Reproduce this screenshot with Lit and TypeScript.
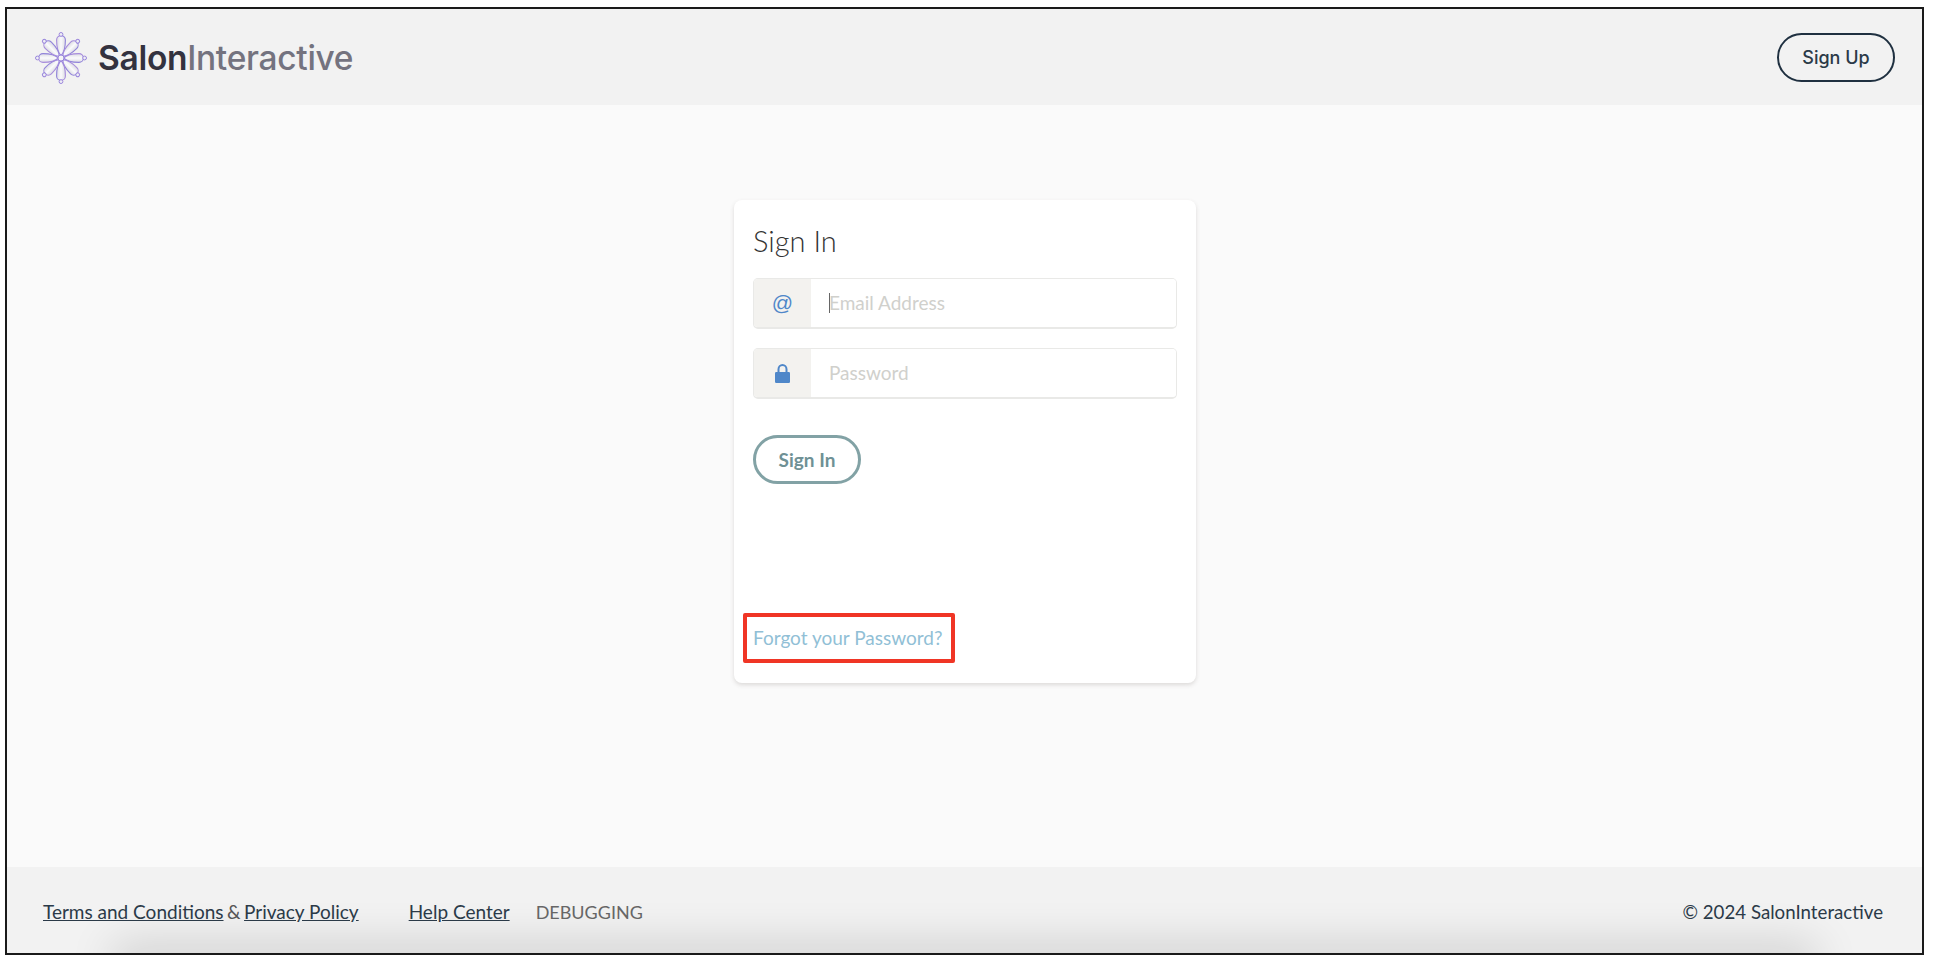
import { LitElement, html, css, svg } from "lit";
import { customElement } from "lit/decorators.js";

const angles = [0, 45, 90, 135, 180, 225, 270, 315];

@customElement("app-root")
export class AppRoot extends LitElement {
  static styles = css`
    :host { display: block; height: 964px; background: #fff; padding: 7px 10px 9px 5px; box-sizing: border-box; font-family: "Lato", "Open Sans", sans-serif; color: #2b3a48; }
    * { box-sizing: border-box; }
    .frame { height: 100%; border: 2px solid #1a1a1a; background: #fafafa; display: flex; flex-direction: column; overflow: hidden; }
    header { height: 96px; flex: none; background: #f2f2f2; display: flex; align-items: center; justify-content: space-between; padding: 2px 27px 0 27px; }
    .brand { display: flex; align-items: center; gap: 10px; font-family: "Inter", sans-serif; font-size: 33.5px; font-weight: 600; letter-spacing: -0.3px; color: #33323f; }
    .brand .lite { color: #74737f; font-weight: 500; }
    .logo { width: 54px; height: 54px; display: block; }
    .signup { width: 118px; height: 49px; margin-top: -1px; border: 2px solid #1f3040; border-radius: 25px; background: transparent; font: 500 18px "Inter", sans-serif; color: #2b3a48; }
    main { flex: 1; display: flex; justify-content: center; align-items: flex-start; padding-top: 95px; padding-left: 1px; }
    .card { width: 462px; height: 483px; background: #fff; border-radius: 8px; box-shadow: 0 2px 4px rgba(90,80,70,.18); padding: 23px 19px 0; display: flex; flex-direction: column; position: relative; }
    h1 { margin: 0 0 19px; font-size: 29px; line-height: 36px; font-weight: 300; color: #333; }
    .group { display: flex; height: 51px; border: 1px solid #e9e9e7; border-bottom-width: 2px; border-radius: 5px; overflow: hidden; margin-bottom: 19px; position: relative; }
    .addon { width: 57px; flex: none; background: #f3f2ef; display: flex; align-items: center; justify-content: center; color: #4f87c9; font: 21px "Liberation Sans", sans-serif; }
    .lock { width: 15px; height: 19px; display: block; }
    input { flex: 1; min-width: 0; border: 0; outline: 0; padding: 0 18px 2px; font: 400 19px "Lato", sans-serif; background: #fff; }
    input::placeholder { color: #d0d0cc; opacity: 1; }
    .caret { position: absolute; left: 75px; top: 14px; width: 1px; height: 20px; background: #666; }
    .signin { margin-top: 17px; width: 108px; height: 49px; padding-bottom: 2px; border: 3px solid #82a2a5; border-radius: 25px; background: #fff; color: #6f9195; font: 700 19px "Lato", sans-serif; }
    .forgot { margin-top: auto; margin-bottom: 20px; margin-left: -10px; width: 212px; height: 50px; border: 4px solid #f03525; border-radius: 2px; display: flex; align-items: center; padding: 0 0 2px 6px; color: #91bfd6; font-size: 19px; font-weight: 400; text-decoration: none; }
    footer { height: 86px; flex: none; background: #f2f2f2; display: flex; align-items: center; justify-content: space-between; padding: 3px 39px 0 36px; font-size: 19px; color: #555; position: relative; overflow: hidden; }
    footer::after { content: ""; position: absolute; left: 120px; right: 120px; bottom: -12px; height: 6px; box-shadow: 0 0 45px 14px rgba(0,0,0,.16); }
    footer > * { position: relative; z-index: 1; }
    .links { display: flex; align-items: center; }
    a { color: #2b3a48; }
    .gap1 { margin-left: 50px; }
    .debug { margin-left: 26px; color: #666; font-size: 18px; }
    .amp { margin: 0 3.5px; }
    .copy { color: #2b3a48; font-size: 18.7px; }
  `;

  private petals() {
    return angles.map((a) => svg`
      <g transform="rotate(${a} 27 27)">
        <path d="M27 24.5 C23.4 21 22.6 14 22.6 9 A4.4 4.4 0 0 1 31.4 9 C31.4 14 30.6 21 27 24.5Z" fill="url(#fill)" stroke="url(#st)" stroke-width="1.1"/>
        <circle cx="27" cy="3.4" r="1.9" fill="#eeeef4" stroke="url(#st)" stroke-width="1"/>
      </g>`);
  }

  render() {
    return html`
      <div class="frame">
        <header>
          <div class="brand">
            <svg class="logo" viewBox="0 0 54 54" aria-hidden="true">
              <defs>
                <linearGradient id="st" gradientUnits="userSpaceOnUse" x1="2" y1="27" x2="52" y2="27">
                  <stop offset="0" stop-color="#e2a6dc"/><stop offset=".5" stop-color="#9a86dc"/><stop offset="1" stop-color="#5f6fd0"/>
                </linearGradient>
                <linearGradient id="fill" x1="0" y1="0" x2="1" y2="0">
                  <stop offset="0" stop-color="#dcdce2"/><stop offset=".5" stop-color="#fafafc"/><stop offset="1" stop-color="#dcdce2"/>
                </linearGradient>
              </defs>
              ${this.petals()}
              <circle cx="27" cy="27" r="3" fill="#f4f4f6" stroke="url(#st)"/>
            </svg>
            <span>Salon<span class="lite">Interactive</span></span>
          </div>
          <button class="signup">Sign Up</button>
        </header>
        <main>
          <section class="card">
            <h1>Sign In</h1>
            <div class="group">
              <span class="addon">@</span>
              <input type="text" placeholder="Email Address" />
              <span class="caret"></span>
            </div>
            <div class="group">
              <span class="addon">
                <svg class="lock" viewBox="0 0 15 18" preserveAspectRatio="none" aria-hidden="true">
                  <path d="M3.5 8V5a4 4 0 0 1 8 0v3" fill="none" stroke="#4f87c9" stroke-width="2"/>
                  <rect x="0" y="7.5" width="15" height="10.5" rx="1.3" fill="#4f87c9"/>
                </svg>
              </span>
              <input type="password" placeholder="Password" />
            </div>
            <button class="signin">Sign In</button>
            <a class="forgot" href="#">Forgot your Password?</a>
          </section>
        </main>
        <footer>
          <div class="links">
            <a href="#">Terms and Conditions</a><span class="amp">&amp;</span><a href="#">Privacy Policy</a>
            <a class="gap1" href="#">Help Center</a>
            <span class="debug">DEBUGGING</span>
          </div>
          <div class="copy">© 2024 SalonInteractive</div>
        </footer>
      </div>
    `;
  }
}
